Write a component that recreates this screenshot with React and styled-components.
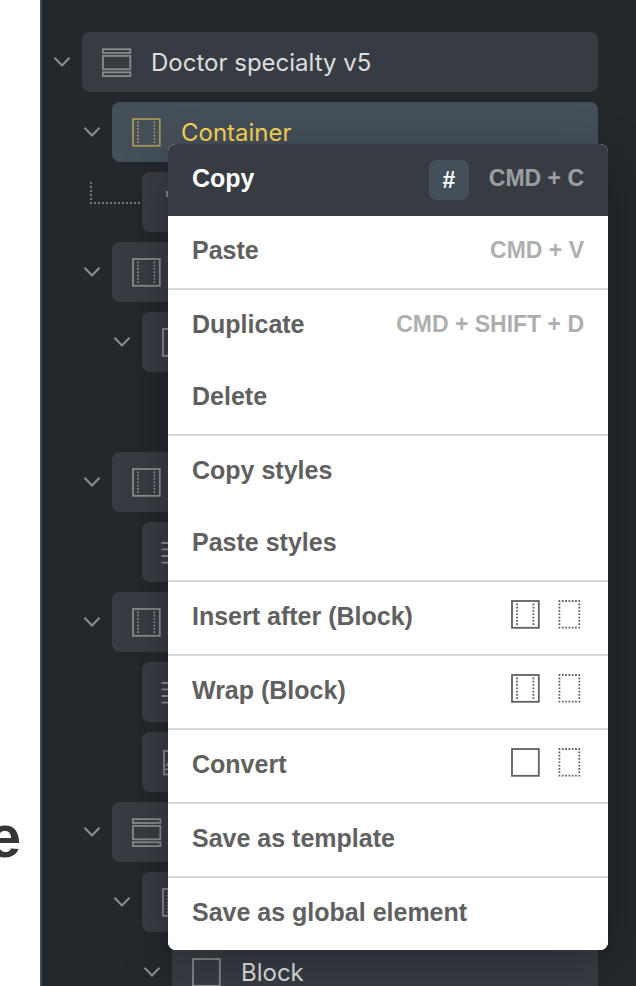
import React, { useState } from 'react'
import styled, { createGlobalStyle } from 'styled-components';

const treeItems = [
  { id: 1, name: 'Doctor specialty v5', type: 'section', level: 0, parent: true },
  { id: 2, name: 'Container', type: 'container', level: 1, parent: true },
  { id: 3, type: 'heading', level: 2, dropLine: true },
  { id: 4, type: 'container', level: 1, parent: true },
  { id: 5, type: 'block', level: 2, parent: true },
  { id: 6, type: 'text', level: 3 },
  { id: 7, type: 'container', level: 1, parent: true },
  { id: 8, type: 'text', level: 2 },
  { id: 9, type: 'container', level: 1, parent: true },
  { id: 10, type: 'text', level: 2 },
  { id: 11, type: 'image', level: 2 },
  { id: 12, type: 'section', level: 1, parent: true },
  { id: 13, type: 'container', level: 2, parent: true },
  { id: 14, name: 'Block', type: 'block', level: 3, parent: true },
]

const menuItems = [
  { label: 'Copy', keys: 'CMD + C', hash: true, active: true },
  { label: 'Paste', keys: 'CMD + V', line: true },
  { label: 'Duplicate', keys: 'CMD + SHIFT + D' },
  { label: 'Delete', line: true },
  { label: 'Copy styles' },
  { label: 'Paste styles', line: true },
  { label: 'Insert after (Block)', icons: ['container', 'div'], line: true },
  { label: 'Wrap (Block)', icons: ['container', 'div'], line: true },
  { label: 'Convert', icons: ['block', 'div'], line: true },
  { label: 'Save as template', line: true },
  { label: 'Save as global element' },
]

const dots = { strokeWidth: 1.8, strokeDasharray: '1.7 1.6' }

const shapes = {
  section: (
    <>
      <rect x="0.9" y="2.2" width="27.4" height="3.8" />
      <rect x="0.9" y="8.9" width="27.4" height="13.4" />
      <rect x="0.9" y="25.3" width="27.4" height="3.8" />
    </>
  ),
  container: (
    <>
      <rect x="1" y="2" width="26.8" height="26.8" />
      <path d="M6 4.5V25.9M22.4 4.5V25.9" {...dots} />
    </>
  ),
  block: <rect x="1" y="2" width="26.8" height="26.8" />,
  div: (
    <path d="M3.6 2H25.1M3.6 28.6H25.1M4.4 4.5V27M24.3 4.5V27" {...dots} />
  ),
  heading: <path d="M5 10V5H25V10M15 5V25M11 25H19" />,
  text: <path d="M-0.5 6H28M-0.5 12.4H28M-0.5 19H28M-0.5 25.6H28" />,
  image: <path d="M2 3.8H27V27.4H2ZM2 22.3H27M4 19L11 11L16 17L20 14L26 20" />,
}

const Icon = ({ type }) => (
  <svg width="30" height="30" viewBox="0 0 30 30" fill="none" stroke="currentColor" strokeWidth="1.8" overflow="visible" aria-hidden="true">
    {shapes[type]}
  </svg>
)

const Element = ({ item, selected, onSelect }) => {
  const [open, setopen] = useState(true)

  return (
    <Row $level={item.level}>
      {item.parent &&
        <Toggle aria-label={open ? 'Collapse' : 'Expand'} onClick={() => setopen(!open)}>
          <svg width="18" height="12" viewBox="0 0 18 12" fill="none" stroke="currentColor" strokeWidth="2.1" aria-hidden="true">
            <path d="M1.5 1.8L9 9.5L16.5 1.8" />
          </svg>
        </Toggle>
      }
      {!item.parent && <Gutter>{item.dropLine && <DropLine />}</Gutter>}
      <Title $selected={selected} onClick={onSelect} aria-label={item.name || item.type}>
        <Icon type={item.type} />
        {item.name && <span>{item.name}</span>}
      </Title>
    </Row>
  )
}

const App = () => {
  const [selected, setselected] = useState(2)

  return (
    <Page>
      <GlobalStyle />
      <Canvas>
        <h1>e</h1>
      </Canvas>
      <Structure>
        {treeItems.map((item) => (
          <Element
            key={item.id}
            item={item}
            selected={selected === item.id}
            onSelect={() => setselected(item.id)}
          />
        ))}
      </Structure>
      <Menu>
        {menuItems.map((item) => (
          <MenuItem key={item.label} $active={item.active} $line={item.line}>
            <MenuButton>
              <span>{item.label}</span>
            </MenuButton>
            {item.hash && <Hash aria-label="Copy ID">#</Hash>}
            {item.keys && <Keys>{item.keys}</Keys>}
            {item.icons &&
              <Options>
                {item.icons.map((type) => (
                  <IconButton key={type} aria-label={item.label + ' ' + type}>
                    <Icon type={type} />
                  </IconButton>
                ))}
              </Options>
            }
          </MenuItem>
        ))}
      </Menu>
    </Page>
  )
}

const GlobalStyle = createGlobalStyle`
  *{
    box-sizing: border-box;
  }
  body{
    margin: 0;
    background: #fff;
  }
  button{
    border: 0;
    padding: 0;
    background: none;
    color: inherit;
    font: inherit;
    cursor: pointer;
  }
  svg{
    display: block;
    flex: none;
  }
`;

const Page = styled.main`
  position: relative;
  display: flex;
  height: 100vh;
  overflow: hidden;
  font-family: Inter, sans-serif;
`;

const Canvas = styled.section`
  flex: 0 0 40px;
  min-width: 0;
  display: flex;
  flex-direction: column;
  justify-content: flex-end;
  align-items: flex-end;
  padding: 0 19px 115px 0;
  h1{
    margin: 0;
    color: #363636;
    font: bold 60px/68px "Liberation Sans", sans-serif;
  }
`;

const Structure = styled.ul`
  flex: 1;
  display: flex;
  flex-direction: column;
  gap: 10px;
  margin: 0;
  padding: 32px 38px 32px 0;
  list-style: none;
  background: #23282d;
  border-left: 2px solid #454f59;
`;

const Row = styled.li`
  display: flex;
  flex: none;
  height: 60px;
  padding-left: ${(props) => props.$level * 30}px;
`;

const Toggle = styled.button`
  flex: 0 0 40px;
  display: flex;
  align-items: center;
  justify-content: center;
  && {
    color: #8a8d90;
  }
`;

const Gutter = styled.div`
  flex: 0 0 40px;
  min-width: 0;
  display: flex;
  justify-content: flex-end;
  padding-right: 2px;
`;

const DropLine = styled.div`
  flex: none;
  width: 50px;
  height: 22px;
  margin: 10px 0 0;
  border: dotted #75797d;
  border-width: 0 0 2px 2px;
`;

const Title = styled.button`
  flex: 1;
  display: flex;
  align-items: center;
  gap: 19px;
  && {
    padding: 0 20px;
    border-radius: 8px;
    background: ${(props) => props.$selected ? '#454f59' : '#373c43'};
    color: ${(props) => props.$selected ? '#f7d354' : '#dcdddf'};
    font-size: 24px;
  }
  svg{
    color: ${(props) => props.$selected ? '#a6955a' : '#888b8f'};
  }
`;

const Menu = styled.ul`
  position: absolute;
  top: 144px;
  left: 168px;
  right: 28px;
  margin: 0;
  padding: 0;
  list-style: none;
  overflow: hidden;
  border-radius: 8px;
  background: #fff;
  color: #606060;
  box-shadow: 0 12px 48px rgba(0, 0, 0, 0.25);
  font-family: "Liberation Sans", sans-serif;
  font-weight: bold;
`;

const MenuItem = styled.li`
  display: flex;
  align-items: center;
  gap: 20px;
  padding-right: 24px;
  background: ${(props) => props.$active ? '#373c43' : '#fff'};
  color: ${(props) => props.$active ? '#fff' : '#606060'};
  border-bottom: ${(props) => props.$line ? '2px solid #d5d8dc' : '0'};
`;

const MenuButton = styled.button`
  flex: 1;
  && {
    height: 72px;
    padding: 0 0 4px 24px;
    font-size: 25px;
    line-height: 30px;
    text-align: left;
    white-space: nowrap;
  }
`;

const Hash = styled.button`
  && {
    width: 40px;
    height: 40px;
    border-radius: 8px;
    background: #454f59;
    font-size: 23px;
  }
`;

const Keys = styled.kbd`
  padding-bottom: 4px;
  opacity: 0.5;
  font: bold 23px/28px "Liberation Sans", sans-serif;
`;

const Options = styled.div`
  display: flex;
  gap: 15px;
  padding-bottom: 8px;
`;

const IconButton = styled.button`
  width: 29px;
`;

export default App;
